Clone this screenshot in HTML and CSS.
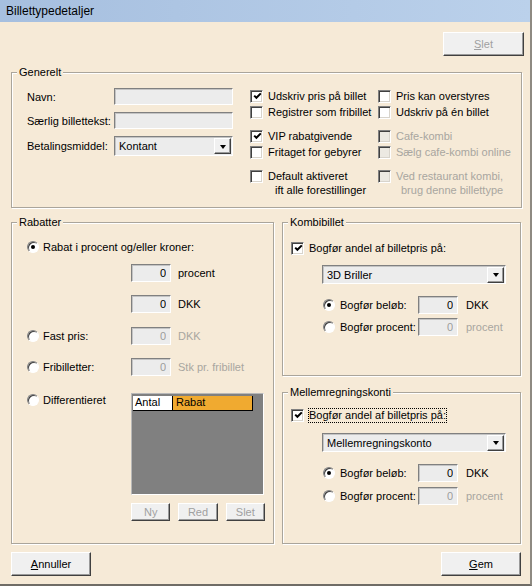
FILE: index.html
```html
<!DOCTYPE html>
<html lang="da">
<head>
  <meta charset="UTF-8">
  <title>Billettypedetaljer</title>
  <link rel="stylesheet" href="styles.css">
</head>
<body>
  <div class="window">
    <div class="titlebar">Billettypedetaljer</div>

    <div class="content">
      <div class="toprow">
        <button class="btn slet-top" disabled><u>S</u>let</button>
      </div>

      <div class="group generelt">
        <span class="legend">Generelt</span>
        <div class="form">
          <label>Navn:</label>
          <input type="text" class="field">
          <label>Særlig billettekst:</label>
          <input type="text" class="field">
          <label>Betalingsmiddel:</label>
          <div class="select"><span>Kontant</span><span class="drop"></span></div>
        </div>

        <div class="checks">
          <div class="col">
            <div class="chk-group">
              <div class="chk"><span class="cb"><svg viewBox="0 0 9 9"><path d="M1.2 3.6 L3.4 5.8 L7.8 1.4"/></svg></span>Udskriv pris på billet</div>
              <div class="chk"><span class="cb"></span>Registrer som fribillet</div>
            </div>
            <div class="chk-group">
              <div class="chk"><span class="cb"><svg viewBox="0 0 9 9"><path d="M1.2 3.6 L3.4 5.8 L7.8 1.4"/></svg></span>VIP rabatgivende</div>
              <div class="chk"><span class="cb"></span>Fritaget for gebyrer</div>
            </div>
            <div class="chk-group last">
              <div class="chk multi"><span class="cb"></span><span>Default aktiveret<span class="line2 a">ift alle forestillinger</span></span></div>
            </div>
          </div>
          <div class="col">
            <div class="chk-group">
              <div class="chk"><span class="cb"></span>Pris kan overstyres</div>
              <div class="chk"><span class="cb"></span>Udskriv på én billet</div>
            </div>
            <div class="chk-group">
              <div class="chk off"><span class="cb"></span>Cafe-kombi</div>
              <div class="chk off"><span class="cb"></span>Sælg cafe-kombi online</div>
            </div>
            <div class="chk-group last">
              <div class="chk multi off"><span class="cb"></span><span>Ved restaurant kombi,<span class="line2 b">brug denne billettype</span></span></div>
            </div>
          </div>
        </div>
      </div>

      <div class="middle">
        <div class="group rabatter">
          <span class="legend">Rabatter</span>

          <div class="row">
            <div class="opt"><span class="rb on"></span>Rabat i procent og/eller kroner:</div>
          </div>
          <div class="row r2">
            <div class="lbl-col"></div>
            <input type="text" class="field num" value="0">
            <span class="unit">procent</span>
          </div>
          <div class="row r3">
            <div class="lbl-col"></div>
            <input type="text" class="field num" value="0">
            <span class="unit">DKK</span>
          </div>
          <div class="row r4">
            <div class="lbl-col opt"><span class="rb"></span>Fast pris:</div>
            <input type="text" class="field num dim" value="0">
            <span class="unit off">DKK</span>
          </div>
          <div class="row r5">
            <div class="lbl-col opt"><span class="rb"></span>Fribilletter:</div>
            <input type="text" class="field num dim" value="0">
            <span class="unit off">Stk pr. fribillet</span>
          </div>
          <div class="row r6">
            <div class="lbl-col opt"><span class="rb"></span>Differentieret</div>
            <div class="grid">
              <div class="ghead">
                <span class="gh antal">Antal</span>
                <span class="gh rabat">Rabat</span>
              </div>
            </div>
          </div>
          <div class="row r7">
            <button class="btn small" disabled>Ny</button>
            <button class="btn small" disabled>Red</button>
            <button class="btn small" disabled>Slet</button>
          </div>
        </div>

        <div class="right">
          <div class="group konto kombi">
            <span class="legend">Kombibillet</span>
            <div class="chk"><span class="cb"><svg viewBox="0 0 9 9"><path d="M1.2 3.6 L3.4 5.8 L7.8 1.4"/></svg></span>Bogfør andel af billetpris på:</div>
            <div class="select wide"><span>3D Briller</span><span class="drop"></span></div>
            <div class="rrow first">
              <div class="opt"><span class="rb on"></span>Bogfør beløb:</div>
              <input type="text" class="field num" value="0">
              <span class="unit">DKK</span>
            </div>
            <div class="rrow second">
              <div class="opt"><span class="rb"></span>Bogfør procent:</div>
              <input type="text" class="field num dim" value="0">
              <span class="unit off">procent</span>
            </div>
          </div>

          <div class="group konto mellem">
            <span class="legend">Mellemregningskonti</span>
            <div class="chk"><span class="cb"><svg viewBox="0 0 9 9"><path d="M1.2 3.6 L3.4 5.8 L7.8 1.4"/></svg></span><span class="focus">Bogfør andel af billetpris på:</span></div>
            <div class="select wide"><span>Mellemregningskonto</span><span class="drop"></span></div>
            <div class="rrow first">
              <div class="opt"><span class="rb on"></span>Bogfør beløb:</div>
              <input type="text" class="field num" value="0">
              <span class="unit">DKK</span>
            </div>
            <div class="rrow second">
              <div class="opt"><span class="rb"></span>Bogfør procent:</div>
              <input type="text" class="field num dim" value="0">
              <span class="unit off">procent</span>
            </div>
          </div>
        </div>
      </div>

      <div class="bottom">
        <button class="btn"><u>A</u>nnuller</button>
        <button class="btn gem"><u>G</u>em</button>
      </div>
    </div>
  </div>
</body>
</html>
```

FILE: styles.css
```css
body {
  margin: 0;
  font-family: 'Liberation Sans', Arial, sans-serif;
  font-size: 11px;
  color: #000;
}

.window {
  width: 530px;
  height: 584px;
  background: #f6ead7;
  border-right: 2px solid #8e8a82;
  border-bottom: 2px solid #6f6c66;
}

.titlebar {
  height: 22px;
  line-height: 22px;
  padding-left: 6px;
  font-size: 12px;
  background: linear-gradient(to right, #a6bfdf, #bbd1eb);
}

.content {
  width: 511px;
  padding-left: 11px;
}

/* buttons */
.btn {
  width: 80px;
  height: 24px;
  padding: 0;
  font: inherit;
  color: #000;
  background: #f0f0f0;
  border: 1px solid;
  border-color: #fff #404040 #404040 #fff;
  box-shadow: inset -1px -1px #9a9a9a;
}

.btn:disabled {
  color: #a0a0a0;
}

.btn.small {
  width: 40px;
  height: 18px;
  margin-right: 8px;
}

.toprow {
  display: flex;
  justify-content: flex-end;
  margin-top: 10px;
}

.slet-top {
  width: 81px;
  margin-right: -2px;
}

/* group boxes */
.group {
  position: relative;
  box-sizing: border-box;
  border: 1px solid #aaa59b;
  box-shadow: inset 1px 1px #fff, 1px 1px #fff;
}

.legend {
  position: absolute;
  top: -7px;
  left: 5px;
  padding: 0 2px;
  line-height: 13px;
  background: #f6ead7;
}

.generelt {
  margin-top: 16px;
  height: 136px;
  display: flex;
  padding: 15px 0 0 15px;
}

.form {
  display: grid;
  grid-template-columns: 87px 119px;
  row-gap: 7px;
  align-items: center;
  align-content: start;
}

.field {
  box-sizing: border-box;
  height: 17px;
  margin: 0;
  padding: 0 3px;
  font: inherit;
  color: #000;
  background: #ececec;
  border: 1px solid;
  border-color: #808080 #fff #fff #808080;
  box-shadow: inset 1px 1px #c4c4c4;
  outline: none;
}

.form .field {
  width: 119px;
}

.select {
  box-sizing: border-box;
  height: 20px;
  display: flex;
  align-items: center;
  justify-content: space-between;
  padding: 0 1px 0 4px;
  background: #ececec;
  border: 1px solid;
  border-color: #808080 #fff #fff #808080;
  box-shadow: inset 1px 1px #c4c4c4;
  white-space: nowrap;
}

.drop {
  box-sizing: border-box;
  width: 17px;
  height: 16px;
  display: flex;
  align-items: center;
  justify-content: center;
  background: #f0f0f0;
  border: 1px solid;
  border-color: #fff #404040 #404040 #fff;
  box-shadow: inset -1px -1px #9a9a9a;
}

.drop::after {
  content: "";
  border-left: 3px solid transparent;
  border-right: 3px solid transparent;
  border-top: 4px solid #000;
  margin-top: 1px;
}

/* checkboxes */
.checks {
  display: flex;
  margin-left: 17px;
}

.col {
  width: 128px;
}

.chk-group + .chk-group {
  margin-top: 8px;
}

.chk-group.last {
  margin-top: 9px;
}

.chk {
  display: flex;
  align-items: center;
  height: 16px;
  white-space: nowrap;
}

.chk.multi {
  height: auto;
  align-items: flex-start;
  line-height: 14px;
}

.chk.multi .cb {
  margin-top: 1px;
}

.line2 {
  display: block;
}

.line2.a {
  padding-left: 7px;
}

.line2.b {
  padding-left: 5px;
}

.cb {
  box-sizing: border-box;
  flex: none;
  width: 13px;
  height: 13px;
  margin-right: 5px;
  background: #fff;
  border: 1px solid;
  border-color: #808080 #fff #fff #808080;
  box-shadow: inset 1px 1px #404040, inset -1px -1px #d8d4cc;
  display: flex;
  align-items: center;
  justify-content: center;
}

.cb svg {
  width: 9px;
  height: 9px;
  margin: 1px 0 0 1px;
}

.cb path {
  fill: none;
  stroke: #000;
  stroke-width: 2;
}

.chk.off {
  color: #a8a6a0;
}

.chk.off .cb {
  background: #ece9e2;
}

/* radios */
.opt {
  display: flex;
  align-items: center;
  height: 16px;
  white-space: nowrap;
}

.rb {
  box-sizing: border-box;
  flex: none;
  position: relative;
  width: 12px;
  height: 12px;
  margin-right: 4px;
  border-radius: 50%;
  background: #fff;
  border: 1px solid;
  border-color: #808080 #fff #fff #808080;
  box-shadow: inset 1px 1px #404040;
}

.rb.on::after {
  content: "";
  position: absolute;
  left: 3px;
  top: 3px;
  width: 4px;
  height: 4px;
  border-radius: 50%;
  background: #000;
}

/* middle part */
.middle {
  display: flex;
  margin-top: 14px;
}

.rabatter {
  width: 263px;
  height: 322px;
  padding: 16px 0 0 15px;
}

.row {
  display: flex;
  align-items: center;
}

.lbl-col {
  width: 104px;
}

.num {
  width: 40px;
  height: 18px;
  text-align: right;
  padding-right: 4px;
}

.num.dim {
  color: #9c9c9c;
}

.unit {
  margin-left: 7px;
}

.unit.off {
  color: #a8a6a0;
}

.r2 { margin-top: 9px; }
.r3 { margin-top: 13px; }
.r4 { margin-top: 14px; }
.r5 { margin-top: 13px; }

.r6 {
  margin-top: 17px;
  align-items: flex-start;
}

.r6 .opt {
  margin-top: -1px;
}

.r7 {
  margin-top: 8px;
  padding-left: 104px;
}

.grid {
  box-sizing: border-box;
  width: 133px;
  height: 102px;
  background: #808080;
  border: 1px solid;
  border-color: #b8b8b8 #fff #fff #b8b8b8;
}

.ghead {
  display: flex;
  margin: 2px 0 0 1px;
  height: 15px;
}

.gh {
  box-sizing: border-box;
  line-height: 13px;
  padding-left: 2px;
  border-bottom: 1px solid #000;
}

.gh.antal {
  width: 39px;
  background: #fff;
}

.gh.rabat {
  width: 81px;
  background: #f0aa30;
  border: 1px solid #000;
  border-top: none;
  padding-left: 3px;
}

.right {
  margin-left: 8px;
  width: 239px;
}

.konto {
  padding: 17px 0 0 8px;
}

.kombi {
  height: 154px;
}

.mellem {
  height: 152px;
  margin-top: 16px;
  padding-top: 14px;
}

.select.wide {
  width: 184px;
  height: 19px;
  margin: 9px 0 0 31px;
}

.mellem .select.wide {
  margin-top: 10px;
}

.rrow {
  display: flex;
  align-items: center;
  margin-left: 32px;
}

.rrow .opt {
  width: 95px;
}

.rrow .rb {
  margin-right: 5px;
}

.rrow .unit {
  margin-left: 8px;
}

.rrow.first { margin-top: 12px; }
.rrow.second { margin-top: 4px; }
.mellem .rrow.second { margin-top: 5px; }

.focus {
  outline: 1px dotted #000;
  outline-offset: 0;
  line-height: 13px;
}

.bottom {
  display: flex;
  justify-content: space-between;
  margin-top: 8px;
}

.gem {
  margin-right: 1px;
}
```
